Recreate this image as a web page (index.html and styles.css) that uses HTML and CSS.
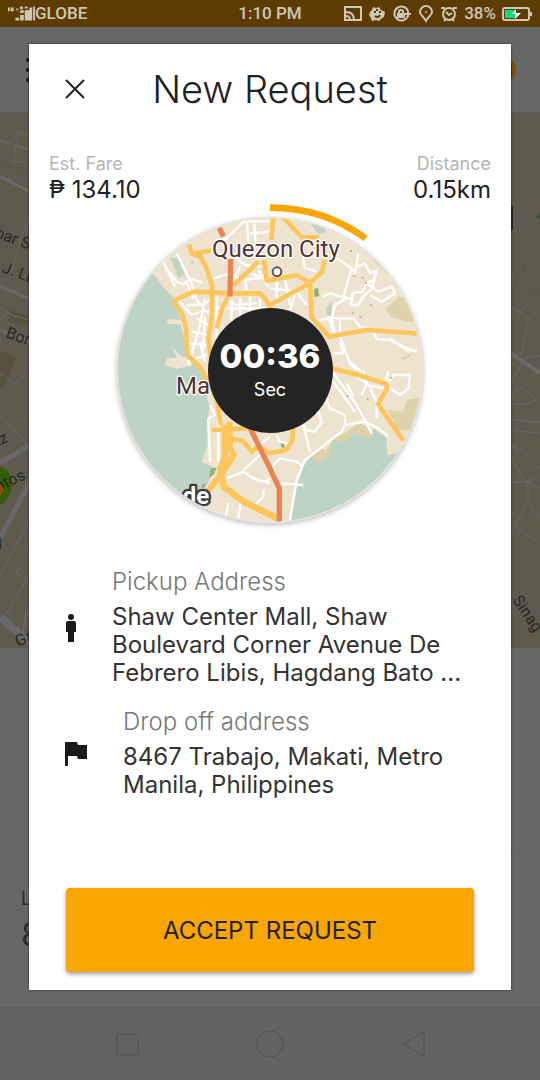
FILE: index.html
```html
<!DOCTYPE html>
<html lang="en">
<head>
<meta charset="utf-8">
<meta name="viewport" content="width=device-width, initial-scale=1">
<title>New Request</title>
<link rel="stylesheet" href="styles.css">
</head>
<body>
<div class="screen">
  <header class="status">
    <div class="status-group">
      <svg class="signal" width="28" height="18" viewBox="0 0 30 18" fill="currentColor" aria-hidden="true"><path d="M1 2h2v4H1zM4 2h3v4H4zM10 3h2v2h-2zM14 1h3v3h-3zM19 1h3v2h-3zM9 13h4v3H9zM14 10h4v6h-4zM14 5h4v3h-4zM19 5h5v11h-5zM24 2h3v14h-3zM28 1h2v15h-2z"/></svg>
      <span>GLOBE</span>
    </div>
    <span class="clock">1:10 PM</span>
    <div class="status-group status-right">
      <svg width="18" height="18" viewBox="0 0 18 18" fill="none" stroke="currentColor" stroke-width="2" aria-hidden="true"><path d="M1 5V2h16v13H1V5M2 7c5 0 8 3 8 8M2 11c3 0 4 2 4 4"/></svg>
      <svg width="18" height="18" viewBox="0 0 18 18" aria-hidden="true"><path fill="currentColor" d="M5 2l3 1 3-1 2 3 4 2-1 5-3 2-2 2-3-1-4 1-1-3-2-3 1-3 2-2z"/><path d="M6 7h2M11 7h2M7 11c2 2 4 1 5-1M9 4v2" stroke="#5c3c00" stroke-width="2" fill="none"/></svg>
      <svg width="20" height="18" viewBox="0 0 20 18" fill="none" stroke="currentColor" stroke-width="2" aria-hidden="true"><path d="M16 11A7 7 0 1 1 16 6M13 9h6M16 6v6"/><path d="M5 8h8v5H5z" fill="currentColor" stroke="none"/><path d="M7 8V6q2-2 4 0v2"/></svg>
      <svg width="16" height="18" viewBox="0 0 16 18" fill="none" stroke="currentColor" stroke-width="2" aria-hidden="true"><path d="M8 16C6 12 2 10 2 7a6 6 0 0 1 12 0c0 3-4 5-6 9z"/><circle cx="8" cy="7" r="1" stroke="none" fill="currentColor"/></svg>
      <svg width="18" height="18" viewBox="0 0 18 18" fill="none" stroke="currentColor" stroke-width="2" aria-hidden="true"><circle cx="9" cy="9" r="6"/><path d="M1 3h4M17 3h-4M6 7l3 3 3-2M4 16l2-2M14 16l-2-2"/></svg>
      <span class="percent">38%</span>
      <svg width="31" height="16" viewBox="0 0 31 16" aria-hidden="true"><rect x="1" y="2" width="26" height="12" rx="2" fill="none" stroke="currentColor" stroke-width="2"/><path d="M28 6h2v4h-2z" fill="currentColor"/><path fill="#10dc78" d="M3 4h10v8H3z"/><path fill="#fff" d="M14 3l-4 5h3l0 5 6-6h-5z"/></svg>
    </div>
  </header>
  <div class="appbar">
    <svg width="20" height="30" viewBox="0 0 20 30" stroke="#111" stroke-width="4" stroke-linecap="round" aria-hidden="true"><path d="M4 5h15M4 15h15M4 25h15"/></svg>
    <svg width="28" height="28" viewBox="0 0 28 28" aria-hidden="true"><circle cx="14" cy="14" r="12" fill="#7a4f08"/><path d="M0 2h20q4 12 0 24H0z" fill="#5c1405"/></svg>
  </div>
  <svg class="backmap" viewBox="0 113 540 535" preserveAspectRatio="xMidYMid slice" role="img" aria-label="Street map">
    <g fill="#59513f"><path d="M10 310l18 6v10l-20-4zM0 350l16 8-12 30H0z"/></g>
    <g fill="none" stroke="#696967" stroke-width="1">
      <path d="M30 137l-12-6-4 30 20 2M0 140l15 5 18 5M16 146l16 5M34 210l-12 25-14 48M0 308l14 8 20 5M0 373l14 10 20-15M0 320l8-8"/>
      <path d="M0 176l34 18M0 286l32 14M0 330l30 12" stroke-width="3"/>
      <path d="M0 463l34-20M0 538l32-60" stroke-width="5"/>
      <path d="M0 415l28 30M12 425l10-6 12 5M0 575l28-52M6 615l30-52M22 565l-6 8 16 10M34 550l-8-4M26 610l-3 22 5-22"/>
      <path d="M0 617l30 26" stroke-width="8"/>
      <path d="M510 306l19 12-8 37M520 312l9-10M510 384l16-27 14-1M510 395l11-8 15 13-10 4-16 0M510 420l30 2M510 430l30 3M510 447c16 0 16 14 30 21M510 458l15 22 15 8M510 482l18 0 0 20-13 24 20 15M528 502l12 18M540 475l-12 7"/>
      <path d="M510 353l30 20" stroke-width="4"/>
    </g>
    <path d="M0 162c10 0 16 12 30 9M510 255c20 6 17 20 6 22-8 12 12 10 24 16" fill="none" stroke="#4c5a4d"/>
    <path d="M0 467q12 3 12 18-3 17-12 20z" fill="#345c05"/><path d="M0 485l5 3-5 8z" fill="#8b5200"/>
    <path d="M508 492q6 12 0 23z" fill="#00600a"/><path d="M540 213v6l-4-2z" fill="#35513a"/>
    <rect x="506" y="205" width="7" height="26" rx="3" fill="#202020"/>
    <g class="street">
      <text transform="translate(-6 237) rotate(20)">bar S</text>
      <text transform="translate(1 272) rotate(20)">J. Lu</text>
      <text transform="translate(5 337) rotate(20)">Bon</text>
      <text transform="translate(-3 447) rotate(-25)">tz</text>
      <text transform="translate(-2 492) rotate(-25)">ntos</text>
      <text transform="translate(-3 547) rotate(-25)">y</text>
      <text transform="translate(-4 638) rotate(-25)">r</text>
      <text transform="translate(18 647) rotate(-25)">Ga</text>
      <text transform="translate(512 600) rotate(56)">Sinag</text>
    </g>
  </svg>
  <div class="sheet">
    <div class="sheet-row"><span>L</span><strong>8</strong></div>
  </div>
  <nav class="navbar" aria-label="System">
    <button aria-label="Recent apps"><svg width="30" height="30" viewBox="0 0 30 30"><rect x="5" y="5" width="21" height="21" rx="1"/></svg></button>
    <button aria-label="Home"><svg width="30" height="30" viewBox="0 0 30 30"><circle cx="15" cy="15" r="13"/></svg></button>
    <button aria-label="Back"><svg width="30" height="30" viewBox="0 0 30 30"><path d="M26 3v24L5 15z"/></svg></button>
  </nav>

  <main class="modal" role="dialog" aria-labelledby="title">
    <div class="modal-head">
      <button class="close" aria-label="Close"><svg width="20" height="20" viewBox="0 0 20 20" fill="none" stroke="#222" stroke-width="2"><path d="M1 1l18 18M19 1L1 19"/></svg></button>
      <h1 id="title">New Request</h1>
    </div>
    <dl class="facts">
      <div><dt>Est. Fare</dt><dd>₱ 134.10</dd></div>
      <div><dt>Distance</dt><dd>0.15km</dd></div>
    </dl>
    <div class="dial">
      <svg class="dial-map" viewBox="0 27 960 996" role="img" aria-label="Map of Quezon City and Manila">
        <defs><clipPath id="disc"><circle cx="480" cy="525" r="456"/></clipPath>
        <filter id="soft" x="-10%" y="-10%" width="120%" height="120%"><feGaussianBlur stdDeviation="6"/></filter></defs>
        <circle cx="480" cy="530" r="462" fill="#c8c8c8" filter="url(#soft)"/>
        <circle cx="480" cy="525" r="460" fill="#e6e6e4"/>
        <g clip-path="url(#disc)" fill="none" stroke-linejoin="round">
          <path fill="#eee3cf" d="M0 0h960v1020H0z"/>
          <path fill="#ddd2a9" d="M825 345l40-40 60 10 20 65-60 0-40-15zM830 645l50 5 10-35 50-10-20 100-60 0-10-30zM600 785l20-25 30 5 20-35 40-20 35-25 30 10 10 30-20 60-140 60zM780 185l60 40 0 20zM870 490l40-15-25 20z"/>
          <path fill="#bcd3c6" d="M0 240h133l20 28 34 34 5 28 23 42-3 20 14 50 8 40 28 30 28 48 0 50 10 20-10 60 3 60-18 50 40 20-35 70-60 80H0z"/>
          <path fill="#bcd3c6" d="M600 785l25 18 35-25 12-45 28 10 38-28 44 15 8-28 38 24 5 54 30-5 60-20v100L700 1020H535l25-145 20-60zM600 85l40 3 10 24-25 5zM180 190l20 30 20 30-10-40 10 0-20-20z"/>
          <path fill="#eee3cf" d="M133 240l20-18 45 50-20 25zM170 372l46 2 8 16-50-4zM185 455l38 36-22-3zM170 490l60-4 20 25-50 10-35-10z"/>
          <path fill="#bfd6bd" d="M180 185l12 32 14 22 18 0-8-20zM195 230l12 20 10-10zM240 200l10-5 0 15zM650 335l15-15 0 50-15 5z"/>
          <path fill="#92b36e" d="M612 282l12-4 4 26-15 2zM510 738l12 0 2 25-10-8zM302 820l18-2-8 20-15 10zM272 875l15-15-5 20z"/>
          <g stroke="#fff" stroke-width="7">
            <path d="M160 200l35 75M170 220l30 40 20 8 20-18 35 12M200 175l45 90 15 50 20 20M230 260l20 50M320 140l30-10 50-50 80-2M410 80l5 60M433 80l3 60M420 115l60-5M310 250l40-12 45 12M380 190l25 20 50 5M390 215l-20 40M420 235l60 20M445 225l30 50"/>
            <path d="M200 310l45 50 35-12 30 5M230 330l50-2 30-20M285 310l-15 80-20 70-15 50M260 370l35 20M245 410l50 10M235 445l55 5M320 300v180M340 310l40 20 60-5M325 340l150 0M365 315v90M390 310v80M420 300v75M450 310v60M285 365l-5 100M230 500l60-20M270 440l15 60"/>
            <path d="M410 285l-5-30 70-10M480 280l80 10 30 40M500 260v70M525 250l15 80M560 285l-20 60M585 220l-5-35 25-5 20 10M590 220l30 10M680 190l45 30 10 15 10-60M725 220l-25 85 30 10M740 215l25-8 15 28 20-8-10 30-20 5-12 28-30 5-5 35 20 0 20-30 25-20 5-30M770 265l35 25 40-15 10 20-40 25-35-20M640 305l20-10 50 15-35 20-10 40 10 50M650 365l30 5 50 0 20 25 40 10M690 370v55M605 380l50-10 20 50M690 425l30 80 20 20M670 475l30-2-10-30M790 410l10 22 40 3 40 20 40 15M840 430l50 35 30 3"/>
            <path d="M660 520l80 110 45 85M655 540l80 110M760 530l10 40 50 10 15-50M780 580l20 40 0 50M830 570l20-30 50 0-5 40-25 20-30-20M640 590l20 50 45 20 0 30 60-10 40 20 30 25M720 500l35 30M740 545l30 20-15 35M710 565l20 40M600 660l25-10 10 30-20 30-30-5-5-30 30-15M705 690l-10 20-110 85-25 60-20 120M580 690l20 80M480 820l30-30 50 10 20 15M500 720l10 20 40 10M490 820l10 30M510 865l70 5M455 745l25-20M465 860l15-10"/>
            <path d="M300 630l15 30-20 10 5 130M325 640v160M350 850l50-20 30 20 50 15M395 910l-10 60M355 925l-10 50M430 935l30-30 0-20M400 825l50-45 30-10"/>
          </g>
          <g stroke="#fcc65c" stroke-width="14">
            <path d="M237 148l8 28 25 8 20 36 17 55-2 95-10 60 8 60M245 178l30-6 28-5M190 318l60-28 100 5 100 0 18 20 15 25M190 318l28 42 10 40 4 80 40 38 48 92 12 80M445 200l-75 72M462 195l8 62 90-16 42 24M480 330l120-66 36-34 9-35M600 262l5 105 52 58 113-20 50 3 100 8M355 300l-20 45-15 55M490 65l-6 70M518 65l58 62 50 0M665 520l80 20 85 27 0 15-26 45 76 110"/>
            <path d="M550 695l-4 45-18 25-50 10M305 705l105-5M360 730l40 8 25 32 20-15 35 20"/>
            <path d="M345 690l0 100-14 35 10 50 60 45 100 50" stroke-width="20"/>
            <path d="M358 680l2 80 12 20-32 50-55 70" stroke-width="18"/>
          </g>
          <path d="M362 192l-2 112M328 98l12 26M418 695l62 125 28 60v110" stroke="#ea8351" stroke-width="16"/>
          <g fill="#c9ae93"><path d="M720 165h6v6h-6zM730 240h6v6h-6zM755 245h6v6h-6zM765 260h6v6h-6zM725 350h6v6h-6zM748 362h6v6h-6zM710 600h6v6h-6zM770 610h6v6h-6zM840 545h6v6h-6zM780 328h6v6h-6z"/></g>
          <g class="place">
            <text x="306" y="186">Quezon City</text>
            <text x="198" y="598">Ma</text>
            <text class="town" x="218" y="928">de</text>
          </g>
          <circle cx="501" cy="230" r="13" fill="#fff" stroke="#555" stroke-width="6"/>
        </g>
        <path d="M480 38A487 487 0 0 1 767 130" fill="none" stroke="#f9a602" stroke-width="20"/>
      </svg>
      <div class="timer"><strong>00:36</strong><span>Sec</span></div>
    </div>
    <section class="stop">
      <svg width="12" height="28" viewBox="0 0 12 28" fill="#1b1b1b" aria-hidden="true"><circle cx="6" cy="3" r="3"/><path d="M3 7h6q2 0 2 2v9H9v10H3V18H1V9q0-2 2-2z"/></svg>
      <div class="stop-text"><h2>Pickup Address</h2><p>Shaw Center Mall, Shaw Boulevard Corner Avenue De Febrero Libis, Hagdang Bato ...</p></div>
    </section>
    <section class="stop stop-drop">
      <svg width="22" height="24" viewBox="0 0 22 24" fill="#1b1b1b" aria-hidden="true"><path d="M0 0h12l1 3h9v14h-9l-1-3H3v10H0z"/></svg>
      <div class="stop-text"><h2>Drop off address</h2><p>8467 Trabajo, Makati, Metro Manila, Philippines</p></div>
    </section>
    <button class="accept">ACCEPT REQUEST</button>
  </main>
</div>
</body>
</html>
```
FILE: styles.css
```css
* { box-sizing: border-box; }
body, h1, h2, p, dl, dd { margin: 0; }
body { font-family: Inter, "Liberation Sans", sans-serif; background: #666; }
button { border: 0; padding: 0; background: none; font: inherit; color: inherit; }
svg { display: block; flex: none; }

.screen { position: relative; min-height: 100vh; display: flex; flex-direction: column; overflow: hidden; }

.status {
  height: 27px; padding: 0 7px; background: #5c3c00; color: #cfc6b9;
  display: grid; grid-template-columns: 1fr auto 1fr; align-items: center;
  font: 500 17px/27px Roboto, sans-serif;
}
.status-group { display: flex; align-items: center; }
.status-right { justify-content: flex-end; gap: 6px; }

.appbar { height: 86px; padding: 0 22px 0 24px; display: flex; align-items: center; justify-content: space-between; background: #666; border-bottom: 1px solid #57554f; }
.backmap { width: 100%; min-height: 0; flex: 1 1 0; background: #5e5a4d; }
.street { font: 16px Roboto, sans-serif; fill: #272727; }
.sheet { height: 359px; padding-top: 202px; background: #676767; }
.sheet-row { height: 157px; padding: 36px 21px 0; border-top: 1px solid #616363; display: flex; flex-direction: column; color: #2b2b2b; }
.sheet-row span { font-size: 18px; line-height: 24px; }
.sheet-row strong { font-size: 32px; line-height: 48px; font-weight: 400; }
.navbar { height: 73px; padding: 0 55px; border-top: 1px solid #5f5f5f; background: #636363; display: grid; grid-template-columns: repeat(3, 1fr); justify-items: center; align-items: center; }
.navbar svg { fill: none; stroke: #525252; stroke-width: 1; }

.modal {
  position: absolute; inset: 44px 29px 90px; background: #fff;
  display: flex; flex-direction: column; box-shadow: 0 0 2px #222;
}
.modal-head { height: 90px; padding: 0 36px; display: grid; grid-template-columns: 1fr auto 1fr; align-items: center; }
.close { justify-self: start; }
h1 { font-size: 38px; line-height: 48px; font-weight: 300; color: #222; }

.facts { padding: 18px 20px 0; display: flex; justify-content: space-between; }
.facts div:last-child { text-align: right; }
dt { font-size: 18px; line-height: 24px; color: #b4b4b4; }
dd { font-size: 24px; line-height: 28px; color: #222; }

.dial { display: grid; place-items: center; }
.dial > * { grid-area: 1 / 1; }
.dial-map { width: 320px; }
.place { font: 72px Roboto, sans-serif; fill: #4f3436; stroke: #fff; stroke-width: 8px; paint-order: stroke; }
.place .town { font-weight: 700; fill: #fff; stroke: #3a3a3a; stroke-width: 14px; }
.timer {
  width: 125px; height: 125px; border-radius: 50%; background: #242424; color: #fff;
  display: flex; flex-direction: column; align-items: center; justify-content: center;
}
.timer strong { font-size: 33px; line-height: 40px; font-weight: 800; }
.timer span { font-size: 18px; line-height: 28px; }

.stop { margin: 32px 36px 0; display: grid; grid-template-columns: 47px 1fr; align-items: center; }
.stop-drop { margin-top: 21px; grid-template-columns: 58px 1fr; }
.stop h2 { font-size: 24px; line-height: 28px; font-weight: 300; color: #777; }
.stop p { margin-top: 7px; font-size: 24px; line-height: 28px; font-weight: 400; color: #333; }

.accept {
  margin: auto 37px 18px; height: 84px; border-radius: 4px; background: #f9a602; color: #222;
  font-size: 24px; box-shadow: 0 2px 4px #9a9a9a;
}
```
